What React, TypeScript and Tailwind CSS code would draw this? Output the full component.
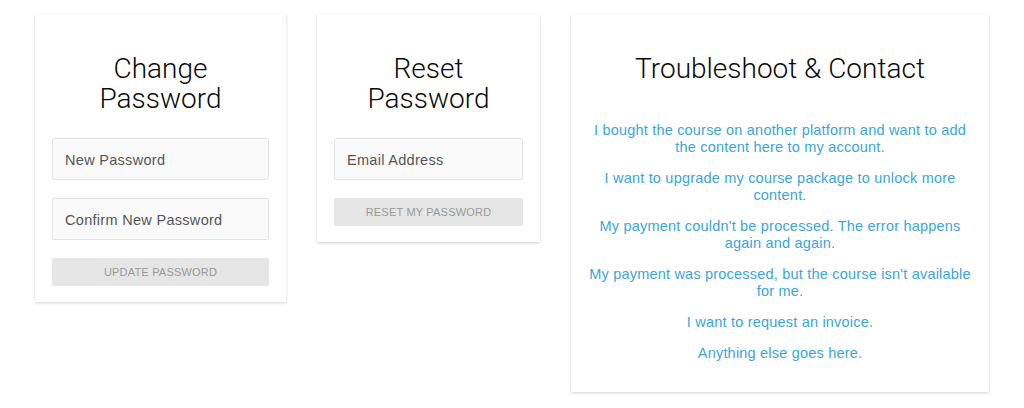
import React from 'react';

const links = [
  'I bought the course on another platform and want to add the content here to my account.',
  'I want to upgrade my course package to unlock more content.',
  "My payment couldn't be processed. The error happens again and again.",
  "My payment was processed, but the course isn't available for me.",
  'I want to request an invoice.',
  'Anything else goes here.',
];

function Field({ placeholder }: { placeholder: string }) {
  return (
    <input
      type="text"
      placeholder={placeholder}
      className="block h-[42px] w-full rounded-[2px] border border-[#e3e3e3] bg-[#fafafa] px-[12px] pt-[2px] text-[14.5px] tracking-[0.3px] text-[#555] outline-none placeholder:text-[#555]"
    />
  );
}

function GreyButton({ label }: { label: string }) {
  return (
    <button
      type="button"
      className="block h-[28px] w-full rounded-[1px] bg-[#e6e6e6] pt-[1px] text-[11px] uppercase tracking-[0.2px] text-[#999]"
    >
      {label}
    </button>
  );
}

export default function App() {
  return (
    <div className="flex min-h-[408px] items-start gap-[31px] bg-white px-[35px] pt-[14px] font-['Liberation_Sans',Arial,sans-serif]">
      <div className="w-[251px] bg-white px-[17px] pb-[16px] pt-[40px] shadow-[0_1px_3px_rgba(0,0,0,0.18)]">
        <h2 className="mb-[24px] text-center font-['Roboto',sans-serif] text-[28px] font-light leading-[30px] text-[#0a0a0a]">
          Change
          <br />
          Password
        </h2>
        <div className="flex flex-col gap-[18px]">
          <Field placeholder="New Password" />
          <Field placeholder="Confirm New Password" />
          <GreyButton label="Update Password" />
        </div>
      </div>

      <div className="w-[223px] bg-white px-[17px] pb-[16px] pt-[40px] shadow-[0_1px_3px_rgba(0,0,0,0.18)]">
        <h2 className="mb-[24px] text-center font-['Roboto',sans-serif] text-[28px] font-light leading-[30px] text-[#0a0a0a]">
          Reset
          <br />
          Password
        </h2>
        <div className="flex flex-col gap-[18px]">
          <Field placeholder="Email Address" />
          <GreyButton label="Reset my password" />
        </div>
      </div>

      <div className="w-[418px] bg-white px-[15px] pb-[30px] pt-[40px] shadow-[0_1px_3px_rgba(0,0,0,0.18)]">
        <h2 className="mb-[38px] text-center font-['Roboto',sans-serif] text-[28px] font-light leading-[30px] text-[#0a0a0a]">
          Troubleshoot &amp; Contact
        </h2>
        <div className="flex flex-col gap-[14px]">
          {links.map((text) => (
            <a
              key={text}
              href="#"
              className="block text-center text-[14.5px] leading-[17px] tracking-[0.2px] text-[#3aa5de]"
            >
              {text}
            </a>
          ))}
        </div>
      </div>
    </div>
  );
}
